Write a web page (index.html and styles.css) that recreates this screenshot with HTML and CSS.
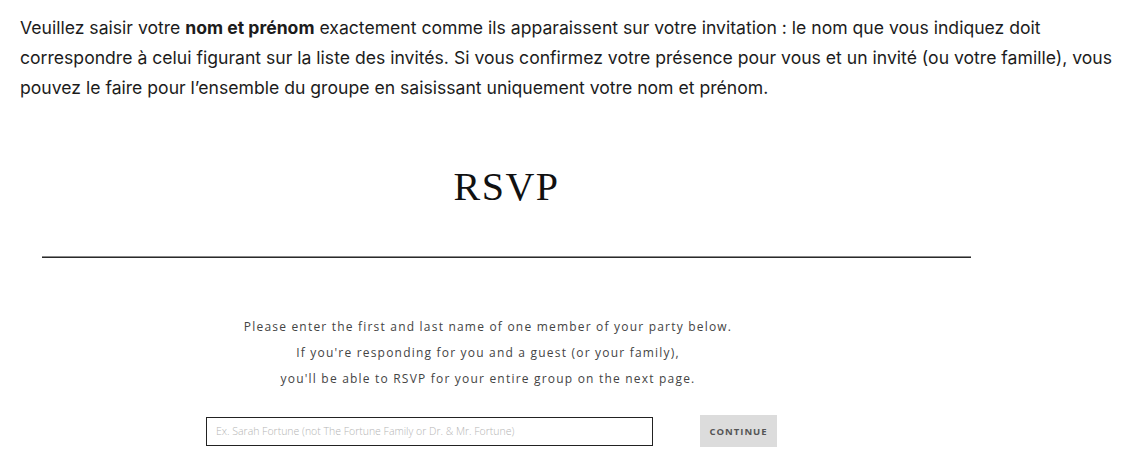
FILE: index.html
```html
<!DOCTYPE html>
<html lang="fr">
<head>
<meta charset="utf-8">
<title>RSVP</title>
<link rel="stylesheet" href="styles.css">
</head>
<body>
<main class="page">
  <p class="intro">Veuillez saisir votre <strong>nom et prénom</strong> exactement comme ils apparaissent sur votre invitation : le nom que vous indiquez doit correspondre à celui figurant sur la liste des invités. Si vous confirmez votre présence pour vous et un invité (ou votre famille), vous pouvez le faire pour l’ensemble du groupe en saisissant uniquement votre nom et prénom.</p>
  <section class="rsvp">
    <h1 class="rsvp-title">RSVP</h1>
    <hr class="rsvp-rule">
    <div class="rsvp-help">
      <p>Please enter the first and last name of one member of your party below.</p>
      <p>If you're responding for you and a guest (or your family),</p>
      <p>you'll be able to RSVP for your entire group on the next page.</p>
    </div>
    <form class="rsvp-form">
      <input class="rsvp-input" type="text" placeholder="Ex. Sarah Fortune (not The Fortune Family or Dr. &amp; Mr. Fortune)">
      <button class="rsvp-button" type="button">CONTINUE</button>
    </form>
  </section>
</main>
</body>
</html>
```
FILE: styles.css
```css
html, body {
  margin: 0;
  padding: 0;
  background: #ffffff;
}

.page {
  padding: 13px 6px 0 20px;
}

.intro {
  margin: 0;
  font-family: Inter, "Liberation Sans", sans-serif;
  font-size: 17.6px;
  line-height: 30px;
  color: #1c1c1c;
}

.intro strong {
  font-weight: 700;
}

.rsvp {
  margin: 62px 0 0 22px;
  width: 929px;
}

.rsvp-title {
  margin: 0;
  text-align: center;
  font-family: "Liberation Serif", "Times New Roman", serif;
  font-weight: 400;
  font-size: 40px;
  line-height: 44px;
  letter-spacing: 1.5px;
  color: #111111;
}

.rsvp-rule {
  margin: 47px 0 0 0;
  border: 0;
  height: 2px;
  background: linear-gradient(#8a8a8a 0 50%, #2a2a2a 50% 100%);
}

.rsvp-help {
  margin-top: 56px;
  padding-right: 37px;
  text-align: center;
  font-family: "Open Sans", "DejaVu Sans", sans-serif;
  font-size: 12px;
  line-height: 26px;
  letter-spacing: 1.2px;
  color: #444444;
}

.rsvp-help p {
  margin: 0;
}

.rsvp-form {
  display: flex;
  align-items: center;
  gap: 47px;
  margin-top: 23px;
  padding-left: 164px;
}

.rsvp-input {
  box-sizing: border-box;
  width: 447px;
  height: 29px;
  margin: 0;
  padding: 0 9px;
  border: 1.5px solid #222222;
  border-radius: 0;
  font-family: "Open Sans", sans-serif;
  font-size: 10.5px;
  color: #333;
  outline: none;
}

.rsvp-input::placeholder {
  color: #b5b5b5;
  font-weight: 300;
}

.rsvp-button {
  box-sizing: border-box;
  width: 77px;
  height: 32px;
  margin: 0;
  padding: 0;
  border: 0;
  background: #dcdcdc;
  font-family: "Open Sans", "DejaVu Sans", sans-serif;
  font-weight: 700;
  font-size: 9.5px;
  letter-spacing: 1px;
  color: #555555;
  cursor: pointer;
}
```
